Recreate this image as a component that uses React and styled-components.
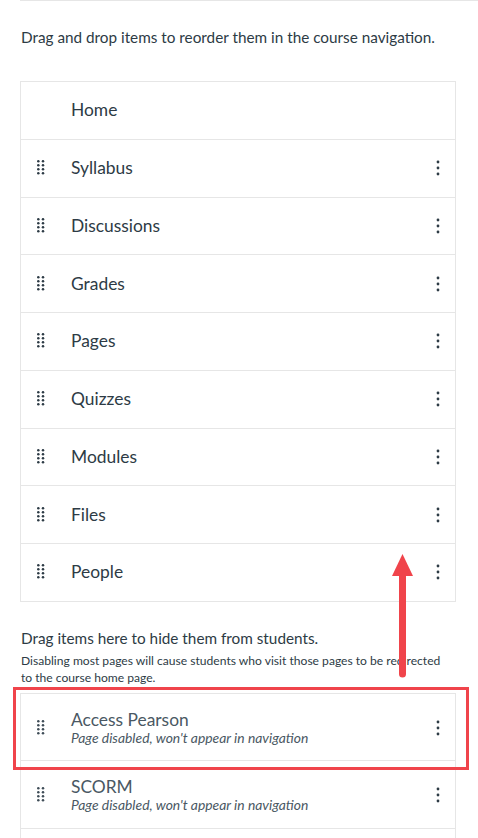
import React from "react";
import styled, { createGlobalStyle } from "styled-components";

const Global = createGlobalStyle`
  html, body { margin: 0; padding: 0; background: #fff; }
  body { font-family: Lato, "Noto Sans", sans-serif; color: #2d3b45; }
`;

const Page = styled.div`
  position: relative;
  margin-left: 20px;
  border-top: 1px solid #e6e6e6;
  padding-top: 24px;
  width: 458px;
`;

const Content = styled.div`
  width: 436px;
`;

const Intro = styled.p`
  margin: 0 0 32px 1px;
  font-size: 15.3px;
  line-height: 24px;
`;

const List = styled.ul`
  list-style: none;
  margin: 0;
  padding: 0 0 ${(p) => p.$tail || 0}px;
  border: 1px solid #e6e6e6;
  border-bottom: none;
  position: relative;
`;

const Row = styled.li`
  box-sizing: border-box;
  height: ${(p) => p.$h}px;
  border-bottom: 1px solid #e6e6e6;
  display: flex;
  align-items: center;
  padding: ${(p) => (p.$sub ? "1.4px 0 0 16px" : "0 0 0 16px")};
`;

const HandleCell = styled.span`
  width: 8px;
  margin-right: 26px;
  display: flex;
  align-items: center;
  visibility: ${(p) => (p.$hidden ? "hidden" : "visible")};
  color: ${(p) => (p.$muted ? "#3f4d57" : "#2d3b45")};
`;

const Label = styled.div`
  flex: 1;
  display: flex;
  flex-direction: column;
`;

const Title = styled.span`
  font-size: 17.4px;
  line-height: ${(p) => (p.$sub ? "20px" : "22px")};
  color: ${(p) => (p.$muted ? "#4a5863" : "#2d3b45")};
`;

const Sub = styled.span`
  font-size: 13.9px;
  line-height: 16px;
  font-style: italic;
  color: #4a5863;
`;

const Kebab = styled.button`
  border: none;
  background: none;
  padding: 0;
  width: 34px;
  display: flex;
  justify-content: center;
  align-items: center;
  color: #2d3b45;
`;

const HideHeading = styled.p`
  margin: 24px 0 0 1px;
  font-size: 15.3px;
  line-height: 24px;
`;

const HideNote = styled.p`
  margin: 2.4px 0 7px 1px;
  max-width: 428px;
  font-size: 12.1px;
  line-height: 17px;
`;

const Highlight = styled.div`
  position: absolute;
  left: -8px;
  top: -7px;
  width: 456px;
  height: 83px;
  box-sizing: border-box;
  border: 3px solid #f0444b;
  pointer-events: none;
`;

const ArrowSvg = styled.svg`
  position: absolute;
  left: 370px;
  top: 550px;
  overflow: visible;
`;

const Grip = () => (
  <svg width="8" height="16" viewBox="0 0 8 16" fill="currentColor">
    {[1.3, 5.3, 9.3, 13.3].map((y) =>
      [1.3, 6].map((x) => <circle key={`${x}-${y}`} cx={x} cy={y} r="1.25" />)
    )}
  </svg>
);

const Dots = () => (
  <svg width="4" height="16" viewBox="0 0 4 16" fill="currentColor">
    <circle cx="2" cy="2" r="1.4" />
    <circle cx="2" cy="8" r="1.4" />
    <circle cx="2" cy="14" r="1.4" />
  </svg>
);

const enabled = ["Home", "Syllabus", "Discussions", "Grades", "Pages", "Quizzes", "Modules", "Files", "People"];
const disabled = ["Access Pearson", "SCORM"];

export default function App() {
  return (
    <>
      <Global />
      <Page>
        <Content>
          <Intro>Drag and drop items to reorder them in the course navigation.</Intro>
          <List>
            {enabled.map((name, i) => (
              <Row key={name} $h={57.75}>
                <HandleCell $hidden={i === 0}>
                  <Grip />
                </HandleCell>
                <Label>
                  <Title>{name}</Title>
                </Label>
                {i !== 0 && (
                  <Kebab aria-label={`Settings for ${name}`}>
                    <Dots />
                  </Kebab>
                )}
              </Row>
            ))}
          </List>
          <HideHeading>Drag items here to hide them from students.</HideHeading>
          <HideNote>
            Disabling most pages will cause students who visit those pages to be redirected to the course home page.
          </HideNote>
          <List $tail={24}>
            {disabled.map((name) => (
              <Row key={name} $h={67.3} $sub>
                <HandleCell $muted>
                  <Grip />
                </HandleCell>
                <Label>
                  <Title $sub $muted>{name}</Title>
                  <Sub>Page disabled, won't appear in navigation</Sub>
                </Label>
                <Kebab aria-label={`Settings for ${name}`}>
                  <Dots />
                </Kebab>
              </Row>
            ))}
            <Highlight />
          </List>
        </Content>
        <ArrowSvg width="30" height="130" viewBox="0 0 30 130">
          <line x1="12.5" y1="22" x2="12.5" y2="123" stroke="#f0444b" strokeWidth="7" strokeLinecap="round" />
          <polygon points="12.5,3 23,25 2,25" fill="#f0444b" />
        </ArrowSvg>
      </Page>
    </>
  );
}
